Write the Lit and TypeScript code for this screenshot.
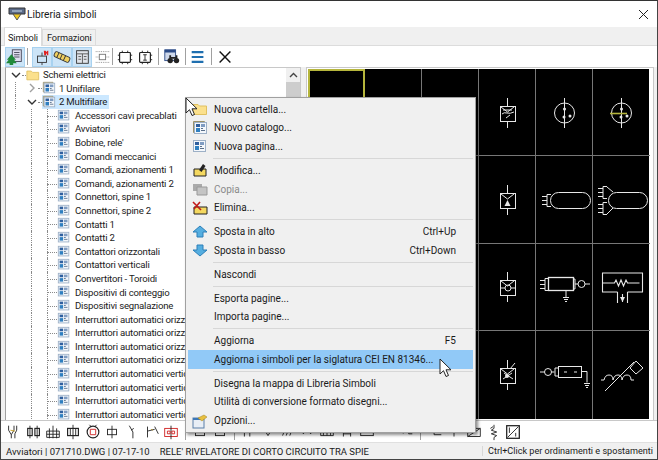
import { LitElement, html, css, svg } from 'lit';
import { customElement } from 'lit/decorators.js';
import { classMap } from 'lit/directives/class-map.js';

const page = (x: number, y: number) => svg`
  <rect x=${x + 0.5} y=${y + 0.5} width="12" height="11" fill="#f4f7fb" stroke="#9db0c6"/>
  <rect x=${x + 2} y=${y + 2} width="4" height="3" fill="#2f5f9e"/>
  <rect x=${x + 7} y=${y + 2} width="4" height="3" fill="#7f9cc2"/>
  <rect x=${x + 2} y=${y + 6} width="4" height="4" fill="#2f7fc0"/>
  <rect x=${x + 7} y=${y + 6} width="2" height="1" fill="#5a6f8a"/>
  <rect x=${x + 7} y=${y + 8} width="4" height="1" fill="#5a6f8a"/>`;

const folder = svg`<path d="M1 3.5h5l1.5 1.500h7v8.500h-13.500z" fill="#fbe08c" stroke="#e0c060"/>`;
const catalog = svg`<path d="M1.500 1.500h11v11h-11z" fill="#e7dfc4" stroke="#9a9068"/>${page(2, 2)}`;

const cursor = html`<svg width="14" height="20" viewBox="0 0 14 20"><path d="M1 1v15l3.500-3.300 2.500 5.800 2.500-1-2.500-5.700h5z" fill="#fff" stroke="#222"/></svg>`;

const treeRows = [
  { t: 'Schemi elettrici', l: 0, open: true },
  { t: '1 Unifilare', l: 1 },
  { t: '2 Multifilare', l: 1, open: true, sel: true },
  ...[
    'Accessori cavi precablati', 'Avviatori', "Bobine, rele'", 'Comandi meccanici',
    'Comandi, azionamenti 1', 'Comandi, azionamenti 2', 'Connettori, spine 1', 'Connettori, spine 2',
    'Contatti 1', 'Contatti 2', 'Contattori orizzontali', 'Contattori verticali',
    'Convertitori - Toroidi', 'Dispositivi di conteggio', 'Dispositivi segnalazione',
    'Interruttori automatici orizzontali', 'Interruttori automatici orizzontali',
    'Interruttori automatici orizzontali', 'Interruttori automatici orizzontali',
    'Interruttori automatici verticali', 'Interruttori automatici verticali',
    'Interruttori automatici verticali', 'Interruttori automatici verticali',
  ].map((t) => ({ t, l: 2 })),
] as { t: string; l: number; open?: boolean; sel?: boolean }[];

const topTools = [
  { on: true, icon: svg`<rect x="7" y="2" width="10" height="13" fill="#dde" stroke="#445"/><path d="M9 5h6M9 7.500h6M9 10h6" stroke="#445"/><path d="M6 7l5 6h-2l3 4h-4v2h-4v-2h-4l3-4h-2z" fill="#1f8a3a"/>` },
  { sep: 'first' },
  { on: true, icon: svg`<rect x="5" y="9" width="10" height="7" fill="none" stroke="#333"/><path d="M10 9v-4M10 16v3" stroke="#333"/><path d="M12 3h2l1 1.500 1-1.500h1v5h-1.500v-2l-.5.500-.5-.5v2h-2z" fill="#e02020"/>` },
  { on: true, icon: svg`<g transform="rotate(25 10 10)"><rect x="1" y="7" width="18" height="6" rx="2" fill="#f0d060" stroke="#333"/><path d="M5 7v6M9 7v6M13 7v6" stroke="#333"/></g>` },
  { on: true, icon: svg`<rect x="4" y="3" width="13" height="14" fill="#e0e4ea" stroke="#333"/><path d="M4 6.500h13M10.500 6.500v10.500M6 9.500h3M12 9.500h3M6 12.500h3M12 12.500h3" stroke="#555"/>` },
  { icon: svg`<rect x="7" y="7" width="7" height="6" fill="none" stroke="#777"/><path d="M3 4h3M3 10h3M3 16h3M15 4h3M15 10h3M15 16h3M7 4h7M7 16h7" stroke="#888" stroke-dasharray="1 1"/>` },
  { sep: 'tight' },
  { icon: svg`<rect x="4" y="5" width="12" height="11" rx="1" fill="#fff" stroke="#222" stroke-width="1.300"/><path d="M7 5v-2M13 5v-2M7 16v2M13 16v2M2 8h2M2 13h2M16 8h2M16 13h2" stroke="#222"/>` },
  { icon: svg`<rect x="4" y="5" width="12" height="11" rx="1" fill="#fff" stroke="#222" stroke-width="1.300"/><path d="M8 7.500h4M10 7.500v6M8 13.500h4M7 5v-2M13 5v-2M7 16v2M13 16v2M16 8h2M16 13h2" stroke="#222"/>` },
  { sep: 'mid' },
  { icon: svg`<rect x="2" y="2" width="12" height="12" fill="#cfd8ea" stroke="#2b4a86"/><rect x="2" y="2" width="12" height="3" fill="#2b4a86"/><circle cx="8" cy="14" r="3" fill="#222"/><circle cx="15" cy="14" r="3" fill="#222"/><path d="M8 8v4M15 8v4M8 11h7" stroke="#222" stroke-width="2"/>` },
  { sep: 'mid' },
  { icon: svg`<path d="M3 4.500h13M3 10h13M3 15.500h13" stroke="#1f6fb0" stroke-width="2.400"/>` },
  { sep: 'mid' },
  { icon: svg`<path d="M4 4l12 12M16 4l-12 12" stroke="#111" stroke-width="1.600"/>` },
];

const s = '#222';
const bottomTools = [
  svg`<path d="M4 3v5l3 5v4M10 3v5l-3 5M13 3v5l-2 4v5" stroke=${s} fill="none"/><path d="M6 8l5 1" stroke="#c9a020"/>`,
  svg`<rect x="3" y="6" width="5" height="8" fill="none" stroke=${s} stroke-width="1.300"/><rect x="11" y="6" width="5" height="8" fill="none" stroke=${s} stroke-width="1.300"/><path d="M5.500 3v14M13.500 3v14" stroke=${s}/>`,
  svg`<path d="M3 9h14v7h-14zM3 12.500h14M6 6v11M10 3v14M14 6v11" fill="none" stroke=${s}/>`,
  svg`<rect x="4" y="6" width="12" height="8" fill="none" stroke=${s} stroke-width="1.300"/><path d="M10 2v16M7 6v8M13 6v8" stroke=${s}/>`,
  svg`<circle cx="10" cy="10" r="6.500" fill="none" stroke=${s} stroke-width="1.300"/><path d="M6 2l2 2M14 2l-2 2" stroke=${s}/><path d="M7 7h6v6h-6z" fill="none" stroke="#d02020"/>`,
  svg`<rect x="5" y="7" width="10" height="6" fill="none" stroke=${s}/><path d="M10 3v14" stroke=${s}/>`,
  svg`<path d="M7 3l4 7v7M12 6l-3 2" stroke=${s} fill="none"/>`,
  svg`<path d="M5 4v12M5 9l8-2M13 4l4 8" stroke=${s} fill="none"/><path d="M9 7l2 1" stroke="#b09020"/>`,
  svg`<rect x="3" y="6" width="14" height="9" fill="#fff" stroke="#d02020"/><path d="M10 3v15" stroke=${s}/><path d="M6 9h3v3h-3zM11 9h3v3h-3z" fill="none" stroke="#d02020"/>`,
  null,
  svg`<rect x="5" y="5" width="10" height="9" fill="none" stroke=${s}/><path d="M5 9h10" stroke="#d02020"/>`,
  svg`<rect x="5" y="5" width="10" height="9" fill="none" stroke=${s}/><path d="M5 9h10" stroke="#d02020"/>`,
  null,
  svg`<path d="M6 5v10M12 5v10M4 9h4M10 9h4" stroke=${s}/>`,
  svg`<path d="M5 6l5 8 5-8z" fill="none" stroke=${s}/>`,
  svg`<path d="M4 14l3-8M8 14l3-8M12 14l3-8" stroke=${s}/><path d="M15 7l2 0" stroke="#d02020"/>`,
  svg`<path d="M3 7h6l-3 5zM11 7h6l-3 5z" fill="none" stroke=${s}/>`,
  svg`<path d="M3 8h14v6h-14zM6 8v6M10 8v6M14 8v6" fill="none" stroke=${s}/>`,
  svg`<path d="M6 5v10M14 5v10M6 12h8" fill="none" stroke=${s}/>`,
  svg`<rect x="3" y="6" width="14" height="8" fill="none" stroke=${s}/>`,
  svg`<path d="M4 8h5M11 8h5" stroke=${s}/>`,
  svg`<circle cx="7" cy="8" r="3" fill="none" stroke=${s}/><path d="M13 4v8h4" fill="none" stroke=${s}/>`,
  null,
  svg`<path d="M3 8h6v5h8" fill="none" stroke=${s}/>`,
  svg`<path d="M3 8h14M10 8v7" fill="none" stroke=${s}/>`,
  svg`<path d="M3 6h14v9h-14zM3 15l14-9" fill="none" stroke=${s}/>`,
  svg`<path d="M10 2v4l-3 2 6 2-6 2 6 2-3 2v3M6 6l3-2" fill="none" stroke=${s}/>`,
  svg`<rect x="3" y="3" width="14" height="14" fill="#fff" stroke=${s} stroke-width="1.400"/><path d="M4 16l12-12M6 5v6M13 11v4" stroke=${s}/>`,
];

const line = '#e8e8e8';
const box = (y = 37) => svg`<path d="M28.500 ${y - 8}v8M28.500 ${y + 15}v7" stroke=${line}/><rect x="21.500" y=${y + 0.5} width="15" height="15" fill="none" stroke=${line}/><path d="M22 ${y + 1}l6.500 5 6.500-5" fill="none" stroke=${line}/>`;
const plugRight = (x: number, y: number) => svg`<path d="M${x + 6} ${y}h-4v12h4M${x + 2} ${y + 2}h-5M${x + 2} ${y + 6}h-5M${x + 2} ${y + 10}h-5" fill="none" stroke=${line}/>`;
const ground = (x: number, y: number) => svg`<path d="M${x - 3} ${y}h6M${x - 2} ${y + 2}h4M${x - 1} ${y + 4}h2" stroke=${line}/>`;

const symbols = [
  null, null, null,
  svg`${box(37)}<path d="M23 45q2-2 5-1t7-1M27 49l4-3M24 41h9" fill="none" stroke=${line}/>`,
  svg`<path d="M28.500 29v30" stroke=${line}/><circle cx="28.500" cy="44" r="10" fill="none" stroke=${line}/><circle cx="28.500" cy="40" r="1.500" fill=${line}/><circle cx="28" cy="48" r="1.500" fill=${line}/><circle cx="34" cy="47" r="1.500" fill=${line}/>`,
  svg`<path d="M28.500 29v30" stroke=${line}/><circle cx="28.500" cy="44" r="10" fill="none" stroke=${line}/><circle cx="28.500" cy="40" r="1.500" fill=${line}/><circle cx="28" cy="48" r="1.500" fill=${line}/><circle cx="34" cy="47" r="1.500" fill=${line}/><path d="M17 44.500h17" stroke="#b5b53c" stroke-width="1.600"/>`,
  null, null, null,
  svg`${box(37)}<path d="M28.500 44l3 6h-6z" fill=${line}/>`,
  svg`<rect x="14.500" y="36.500" width="40" height="16" rx="8" fill="none" stroke=${line}/>${plugRight(9, 38.500)}`,
  svg`<rect x="15.500" y="36.500" width="39" height="16" rx="8" fill="none" stroke=${line}/>${plugRight(8, 30.500)}${plugRight(8, 46.500)}<path d="M14 31l6 5M14 58l6-6" stroke=${line}/>`,
  null, null, null,
  svg`${box(36)}<circle cx="29" cy="44" r="3" fill="none" stroke=${line}/><path d="M22 44h4M32 44h4" stroke=${line}/>`,
  svg`<rect x="12.500" y="33.500" width="25" height="13" fill="none" stroke=${line} stroke-width="1.300"/>${plugRight(7, 34.500)}<path d="M37 35h2v10h-2M39 40h3M49 40h5M30 46v7" fill="none" stroke=${line}/><circle cx="45.500" cy="40" r="3.500" fill="none" stroke=${line}/>${ground(30, 53.500)}`,
  svg`<path d="M24.500 48h-15v-19h40v19h-15M9.500 39h12l1.500-3 2.500 6 2.500-6 2.500 6 2.500-6 1.500 3h12M24.500 48v11M34.500 48v11M29.500 50v8" fill="none" stroke=${line} stroke-width="1.100"/><path d="M27 53h5l-2.500 5z" fill=${line}/>`,
  null, null, null,
  svg`${box(37)}<path d="M36 32l-5 6M24 48l9-6M25 42l9 6" fill="none" stroke=${line}/><circle cx="28" cy="45" r="2" fill=${line}/>`,
  svg`<circle cx="12" cy="41" r="3.500" fill="none" stroke=${line}/><path d="M4 41h4.500M15.500 41h3M45 40.500h6v11" fill="none" stroke=${line}/><rect x="22.500" y="35.500" width="23" height="11" fill="none" stroke=${line}/><path d="M22 37h-3v8h3M28 41h3M38 41h3" fill="none" stroke=${line}/>${ground(51, 52.500)}`,
  svg`<path d="M8 49h3q1-5 5-5t4 5q1-5 5-5t4 5q1-5 5-5t4 5h3M12 60l29-29" fill="none" stroke=${line}/><path d="M43 30l7 7-7 6-6-6z" fill="none" stroke=${line}/>`,
];

type Entry = { t?: string; k?: string; dis?: boolean; hot?: boolean; sep?: boolean; icon?: unknown };
const menu: Entry[] = [
  { t: 'Nuova cartella...', icon: folder },
  { t: 'Nuovo catalogo...', icon: catalog },
  { t: 'Nuova pagina...', icon: page(1, 2) },
  { sep: true },
  { t: 'Modifica...', icon: svg`<path d="M2 7h12v7h-12z" fill="#f4d860" stroke="#222"/><path d="M7 8l4-6 2.500 2-4 6z" fill="#222"/>` },
  { t: 'Copia...', dis: true, icon: svg`<path d="M1 3h9v7h-9z" fill="#aaa"/><path d="M5 6h10v8h-10z" fill="#c4c4c4" stroke="#999"/>` },
  { t: 'Elimina...', icon: svg`<path d="M2 7h13v7h-13z" fill="#f4d860" stroke="#222"/><path d="M1 2l8 8M8 2l-6 7" stroke="#c01818" stroke-width="1.600"/>` },
  { sep: true },
  { t: 'Sposta in alto', k: 'Ctrl+Up', icon: svg`<path d="M8 2l7 6h-4v5h-6v-5h-4z" fill="#55aee0" stroke="#2c7fb8"/>` },
  { t: 'Sposta in basso', k: 'Ctrl+Down', icon: svg`<path d="M8 14l7-6h-4v-5h-6v5h-4z" fill="#55aee0" stroke="#2c7fb8"/>` },
  { sep: true },
  { t: 'Nascondi' },
  { sep: true },
  { t: 'Esporta pagine...' },
  { t: 'Importa pagine...' },
  { sep: true },
  { t: 'Aggiorna', k: 'F5' },
  { t: 'Aggiorna i simboli per la siglatura CEI EN 81346...', hot: true },
  { sep: true },
  { t: 'Disegna la mappa di Libreria Simboli' },
  { t: 'Utilità di conversione formato disegni...' },
  { t: 'Opzioni...', icon: svg`<rect x="1" y="5" width="11" height="10" fill="#e8eef6" stroke="#5a7fa8"/><rect x="1" y="5" width="11" height="2" fill="#3d78b8"/><path d="M6 5l6-3 3 2-5 4z" fill="#e8c040" stroke="#a08020" stroke-width=".5"/>` },
];

@customElement('app-root')
export class AppRoot extends LitElement {
  static styles = css`
    :host {
      display: block;
      width: 658px;
      height: 460px;
      font-family: 'Roboto', 'Liberation Sans', sans-serif;
      font-size: 10px;
      color: #1a1a1a;
    }
    .win {
      position: relative;
      box-sizing: border-box;
      width: 658px;
      height: 460px;
      border: 1px solid #444;
      border-top-color: #333;
      background: #f0f0f0;
      display: flex;
      flex-direction: column;
      overflow: hidden;
    }
    .title {
      height: 26px;
      flex: none;
      background: #fff;
      display: flex;
      align-items: center;
      padding: 0 8px 0 7px;
      gap: 1px;
      font-size: 10.200px;
    }
    .title span { flex: 1; }
    .tabs {
      height: 18px;
      flex: none;
      display: flex;
      align-items: flex-end;
      padding-left: 3px;
      background: #f0f0f0;
      border-bottom: 1px solid #dcdcdc;
      font-size: 9.200px;
      letter-spacing: -0.100px;
    }
    .tab {
      height: 15px;
      padding: 0 3px 0 4px;
      display: flex;
      align-items: center;
      background: #f0f0f0;
      border: 1px solid #dcdcdc;
      border-bottom: none;
    }
    .tab.on { height: 18px; background: #fff; margin-bottom: -1px; padding: 0 3px; }
    .tools {
      height: 21px;
      flex: none;
      background: #fff;
      display: flex;
      align-items: center;
      padding-left: 4px;
    }
    .tb { width: 20px; height: 20px; flex: none; display: flex; align-items: center; justify-content: center; box-sizing: border-box; }
    .tb.on { background: #cce4f7; border: 1px solid #a8d2f0; }
    .tsep { width: 1px; height: 17px; background: #a0a0a0; flex: none; margin: 0 4px; }
    .tsep.first { margin: 0 4px 0 2px; }
    .tsep.tight { margin: 0 2px 0 0; }
    .tsep.mid { margin: 0 2.500px 0 3px; }
    .main {
      height: 353px;
      flex: none;
      display: flex;
      background: #f0f0f0;
      padding-left: 4px;
      gap: 5px;
    }
    .tree {
      width: 296px;
      box-sizing: border-box;
      background: #fff;
      border: 1px solid #c8c8c8;
      border-left-color: #a0a0a0;
      border-bottom: none;
      display: flex;
      overflow: hidden;
      font-size: 9.600px;
      letter-spacing: -0.200px;
    }
    .rows { flex: 1; overflow: hidden; }
    .bar { width: 14px; flex: none; background: #f0f0f0; display: flex; flex-direction: column; align-items: center; }
    .bar .up { height: 14px; display: flex; align-items: center; }
    .bar .thumb { width: 14px; height: 60px; background: #cdcdcd; }
    .row { height: 13.600px; display: flex; align-items: center; white-space: nowrap; }
    .g { width: 16px; height: 100%; flex: none; position: relative; }
    .g.line::before { content: ''; position: absolute; left: 0; top: 0; bottom: 0; border-left: 1px dotted #8a8a8a; }
    .lead { width: 9px; flex: none; }
    .tw { width: 10px; height: 10px; flex: none; margin-left: -4px; margin-right: 1px; }
    .elbow { width: 10px; height: 100%; flex: none; position: relative; }
    .elbow::before { content: ''; position: absolute; left: 0; top: 0; bottom: 0; border-left: 1px dotted #8a8a8a; }
    .elbow::after { content: ''; position: absolute; left: 0; right: 0; top: 50%; border-top: 1px dotted #8a8a8a; }
    .elbow.short { width: 4px; }
    .elbow.short::before { display: none; }
    .ico { width: 14px; height: 14px; flex: none; }
    .lbl { padding: 0 2px 0 3px; line-height: 13.600px; }
    .row.deep .lbl { padding-left: 4px; }
    .row.sel .lbl, .row.sel .ico { background: #cce8ff; }
    .canvas {
      width: 348px;
      box-sizing: border-box;
      background: #fff;
      border: 1px solid #c8c8c8;
      border-bottom: none;
      padding: 1px 5px 1px 1px;
    }
    .grid {
      background: #000;
      display: grid;
      grid-template-columns: repeat(6, 57px);
      grid-template-rows: 87px 88px 87px 88px;
      width: 341px;
    }
    .cell { border-right: 1px solid #777; border-bottom: 1px solid #777; box-sizing: border-box; }
    .cell:nth-child(6n) { border-right: none; }
    .cell:nth-last-child(-n + 6) { border-bottom: none; }
    .cell.sel { outline: 2px solid #b5b53c; outline-offset: -2px; }
    .cell svg { display: block; }
    .tools2 {
      height: 22px;
      flex: none;
      background: #fff;
      display: flex;
      align-items: center;
      padding-left: 3px;
      border-top: 1px solid #c8c8c8;
      box-sizing: border-box;
    }
    .tools2 .tb { width: 19.700px; }
    .status {
      flex: 1;
      background: #f0f0f0;
      display: flex;
      align-items: center;
      white-space: nowrap;
      border-top: 1px solid #e0e0e0;
      font-size: 9.500px;
    }
    .status .a { width: 481px; flex: none; padding-left: 5px; box-sizing: border-box; }
    .status .gap { display: inline-block; width: 10px; }
    .status .b { flex: 1; padding-left: 5px; border-left: 1px solid #d8d8d8; font-size: 9.100px; }
    .menu {
      position: absolute;
      left: 184px;
      top: 96px;
      width: 291px;
      box-sizing: border-box;
      background: #f0f0f0;
      border: 1px solid #a0a0a0;
      box-shadow: 2px 2px 3px rgba(0, 0, 0, 0.45);
      padding: 2px;
    }
    .item { height: 18.600px; display: flex; align-items: center; padding-right: 17px; white-space: nowrap; }
    .item .mi { width: 26px; flex: none; display: flex; justify-content: center; padding-right: 3px; box-sizing: border-box; }
    .item .t { flex: 1; }
    .item.dis { color: #8a8a8a; }
    .item.hot { background: #91c9f7; }
    .msep { height: 5.400px; display: flex; align-items: center; padding-left: 25px; }
    .msep::after { content: ''; flex: 1; height: 1px; background: #d7d7d7; }
    .cur { position: absolute; line-height: 0; }
    .cur.c1 { left: 184px; top: 96px; }
    .cur.c2 { left: 438px; top: 357px; }
  `;

  treeRow(r: { t: string; l: number; open?: boolean; sel?: boolean }) {
    const chevron = r.open
      ? html`<svg class="tw" viewBox="0 0 10 10"><path d="M1 3l4 4 4-4" fill="none" stroke="#333" stroke-width="1.400"/></svg>`
      : html`<svg class="tw" viewBox="0 0 10 10"><path d="M3 1l4 4-4 4" fill="none" stroke="#a0a0a0" stroke-width="1.400"/></svg>`;
    const icon = r.l === 0 ? folder : r.l === 1 ? catalog : page(1, 1);
    return html`<div class=${classMap({ row: true, sel: !!r.sel, deep: r.l === 2 })}>
      <div class="lead"></div>
      ${r.l > 0 ? html`<div class=${classMap({ g: true, line: r.l === 1 })}></div>` : ''}
      ${r.l === 2 ? html`<div class="g line"></div><div class="elbow"></div>` : chevron}
      ${r.l < 2 ? html`<div class="elbow short"></div>` : ''}
      <svg class="ico" viewBox="0 0 16 16">${icon}</svg>
      <span class="lbl">${r.t}</span>
    </div>`;
  }

  render() {
    return html`<div class="win">
      <div class="title">
        <svg width="18" height="14" viewBox="0 0 18 14">
          <path d="M1 1h16v6h-16z" fill="#5a6a88" stroke="#333"/>
          <path d="M4 4h10" stroke="#cde" />
          <path d="M5 7l4 6 4-6z" fill="#f0c820" stroke="#555"/>
        </svg>
        <span>Libreria simboli</span>
        <svg width="11" height="11" viewBox="0 0 11 11"><path d="M1 1l9 9M10 1l-9 9" stroke="#222"/></svg>
      </div>
      <div class="tabs">
        <div class="tab on">Simboli</div>
        <div class="tab">Formazioni</div>
      </div>
      <div class="tools">
        ${topTools.map((b) =>
          b.sep
            ? html`<div class="tsep ${b.sep}"></div>`
            : html`<div class=${classMap({ tb: true, on: !!b.on })}><svg width="18" height="18" viewBox="0 0 20 20">${b.icon}</svg></div>`
        )}
      </div>
      <div class="main">
        <div class="tree">
          <div class="rows">${treeRows.map((r) => this.treeRow(r))}</div>
          <div class="bar">
            <div class="up"><svg width="9" height="6" viewBox="0 0 9 6"><path d="M1 5l3.500-3.500 3.500 3.500" fill="none" stroke="#444" stroke-width="1.400"/></svg></div>
            <div class="thumb"></div>
          </div>
        </div>
        <div class="canvas">
          <div class="grid">
            ${symbols.map(
              (sym, i) => html`<div class=${classMap({ cell: true, sel: i === 0 })}>
                <svg width="57" height="88" viewBox="0 0 57 88">${sym}</svg>
              </div>`
            )}
          </div>
        </div>
      </div>
      <div class="tools2">
        ${bottomTools.map((b) =>
          b
            ? html`<div class="tb"><svg width="18" height="18" viewBox="0 0 20 20">${b}</svg></div>`
            : html`<div class="tsep"></div>`
        )}
      </div>
      <div class="status">
        <div class="a">Avviatori | 071710.DWG | 07-17-10<span class="gap"></span>RELE' RIVELATORE DI CORTO CIRCUITO TRA SPIE</div>
        <div class="b">Ctrl+Click per ordinamenti e spostamenti</div>
      </div>
      <div class="menu">
        ${menu.map((m) =>
          m.sep
            ? html`<div class="msep"></div>`
            : html`<div class=${classMap({ item: true, dis: !!m.dis, hot: !!m.hot })}>
                <div class="mi">${m.icon ? html`<svg width="16" height="16" viewBox="0 0 16 16">${m.icon}</svg>` : ''}</div>
                <span class="t">${m.t}</span>
                ${m.k ? html`<span>${m.k}</span>` : ''}
              </div>`
        )}
      </div>
      <div class="cur c1">${cursor}</div>
      <div class="cur c2">${cursor}</div>
    </div>`;
  }
}
